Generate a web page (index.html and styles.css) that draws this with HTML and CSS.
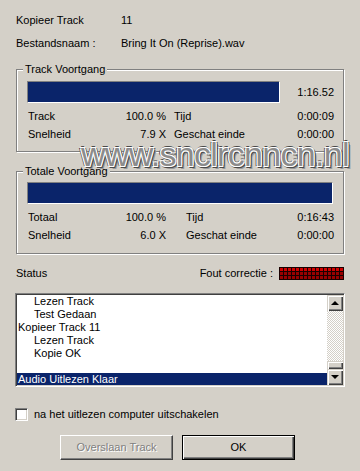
FILE: index.html
```html
<!DOCTYPE html>
<html>
<head>
<meta charset="utf-8">
<link rel="stylesheet" href="styles.css">
</head>
<body>
<div class="dialog">
  <div class="info">
    <div class="info-row"><span class="info-label">Kopieer Track</span><span>11</span></div>
    <div class="info-row second"><span class="info-label">Bestandsnaam :</span><span>Bring It On (Reprise).wav</span></div>
  </div>

  <div class="group group-track">
    <span class="legend">Track Voortgang</span>
    <div class="bar-row bar-row-track">
      <div class="bar bar-short"></div>
      <span class="time">1:16.52</span>
    </div>
    <div class="stats">
      <span>Track</span><span class="num">100.0 %</span><span class="lbl2">Tijd</span><span class="val">0:00:09</span>
      <span>Snelheid</span><span class="num">7.9 X</span><span class="lbl2">Geschat einde</span><span class="val">0:00:00</span>
    </div>
  </div>

  <div class="group group-total">
    <span class="legend">Totale Voortgang</span>
    <div class="bar-row bar-row-total">
      <div class="bar bar-long"></div>
    </div>
    <div class="stats stats-total">
      <span>Totaal</span><span class="num">100.0 %</span><span class="lbl2">Tijd</span><span class="val">0:16:43</span>
      <span>Snelheid</span><span class="num">6.0 X</span><span class="lbl2">Geschat einde</span><span class="val">0:00:00</span>
    </div>
  </div>

  <div class="status-row">
    <span>Status</span>
    <span class="fout">Fout correctie :</span>
    <svg class="led" width="65" height="13" viewBox="0 0 65 13">
      <defs>
        <pattern id="ledTop" width="4" height="4" patternUnits="userSpaceOnUse"><rect x="1" y="1" width="3" height="3" fill="#d00000"/></pattern>
        <pattern id="ledLow" width="4" height="4" patternUnits="userSpaceOnUse"><rect x="1" y="1" width="3" height="3" fill="#980000"/></pattern>
      </defs>
      <rect width="65" height="13" fill="#1a0000"/>
      <rect width="65" height="5" fill="url(#ledTop)"/>
      <rect y="5" width="65" height="8" fill="url(#ledLow)"/>
    </svg>
  </div>

  <div class="listbox">
    <div class="items">
      <div class="item sub">Lezen Track</div>
      <div class="item sub">Test Gedaan</div>
      <div class="item">Kopieer Track 11</div>
      <div class="item sub">Lezen Track</div>
      <div class="item sub">Kopie OK</div>
      <div class="item"></div>
      <div class="item selected">Audio Uitlezen Klaar</div>
    </div>
    <div class="scrollbar">
      <div class="sb-btn"><span class="arrow-up"></span></div>
      <div class="sb-track"></div>
      <div class="sb-thumb"></div>
      <div class="sb-btn"><span class="arrow-down"></span></div>
    </div>
  </div>

  <div class="check-row">
    <span class="checkbox"></span>
    <span>na het uitlezen computer uitschakelen</span>
  </div>

  <div class="buttons">
    <div class="btn disabled">Overslaan Track</div>
    <div class="btn default">OK</div>
  </div>

  <div class="watermark">www.snclrcnncn.nl</div>
</div>
</body>
</html>
```
FILE: styles.css
```css
* { box-sizing: border-box; }
html, body { margin: 0; padding: 0; }
body { background: #d4d0c8; }

.dialog {
  position: relative;
  width: 360px;
  height: 471px;
  overflow: hidden;
  background: #d4d0c8;
  font-family: "Liberation Sans", Arial, sans-serif;
  font-size: 11px;
  color: #000;
  display: flex;
  flex-direction: column;
}

.info { padding: 14px 0 0 16px; }
.info-row { display: flex; height: 13px; line-height: 13px; }
.info-row.second { margin-top: 10px; }
.info-label { width: 105px; }

.group {
  margin-left: 16px;
  width: 328px;
  height: 83px;
  border: 1px solid #808080;
  box-shadow: inset 1px 1px 0 #fff, 1px 1px 0 #fff;
  display: flex;
  flex-direction: column;
}
.group-track { margin-top: 19px; }
.group-total { margin-top: 19px; }

.legend {
  align-self: flex-start;
  height: 13px;
  line-height: 13px;
  margin: -7px 0 0 6px;
  padding: 0 2px;
  background: #d4d0c8;
  position: relative;
}

.bar-row {
  display: flex;
  align-items: center;
  padding-left: 10px;
  height: 22px;
}
.bar-row-track { margin-top: 5px; }
.bar-row-total { margin-top: 4px; }

.bar {
  height: 22px;
  background: #0a246a;
  border: 1px solid;
  border-color: #808080 #fff #fff #808080;
}
.bar-short { width: 253px; }
.bar-long { width: 306px; }

.time { margin-left: auto; padding-right: 9px; }

.stats {
  margin-top: 4px;
  padding: 0 9px 0 11px;
  display: grid;
  grid-template-columns: 72px 66px 1fr auto;
  grid-auto-rows: 18px;
  align-items: center;
  line-height: 13px;
}
.num { text-align: right; }
.lbl2 { padding-left: 8px; }
.stats-total .lbl2 { padding-left: 20px; }
.val { text-align: right; }

.status-row {
  margin-top: 13px;
  height: 13px;
  line-height: 13px;
  padding: 0 16px;
  display: flex;
  align-items: center;
}
.fout { margin-left: auto; margin-right: 6px; }
.led { display: block; }

.listbox {
  margin: 13px 0 0 15px;
  width: 330px;
  height: 94px;
  background: #fff;
  border: 1px solid;
  border-color: #808080 #fff #fff #808080;
  box-shadow: inset 1px 1px 0 #404040, inset -1px -1px 0 #d4d0c8;
  padding: 1px;
  display: flex;
}
.items { flex: 1; overflow: hidden; }
.item { height: 13px; line-height: 13px; padding-left: 1px; white-space: nowrap; }
.item.sub { padding-left: 17px; }
.item.selected { background: #0a246a; color: #fff; }

.scrollbar { width: 16px; display: flex; flex-direction: column; }
.sb-btn, .sb-thumb {
  background: #d4d0c8;
  box-shadow: inset 1px 1px 0 #d4d0c8, inset 2px 2px 0 #fff, inset -1px -1px 0 #404040, inset -2px -2px 0 #808080;
}
.sb-btn { height: 16px; display: flex; align-items: center; justify-content: center; }
.sb-track {
  flex: 1;
  background: repeating-conic-gradient(#fff 0 25%, #d4d0c8 0 50%) 0 0 / 2px 2px;
}
.sb-thumb { height: 8px; }
.arrow-up, .arrow-down { width: 0; height: 0; border-left: 4px solid transparent; border-right: 4px solid transparent; }
.arrow-up { border-bottom: 4px solid #000; margin-top: -1px; }
.arrow-down { border-top: 4px solid #000; }

.check-row {
  margin: 21px 0 0 15px;
  display: flex;
  align-items: center;
  height: 13px;
  line-height: 13px;
}
.checkbox {
  width: 13px;
  height: 13px;
  background: #fff;
  border: 1px solid;
  border-color: #808080 #fff #fff #808080;
  box-shadow: inset 1px 1px 0 #404040, inset -1px -1px 0 #d4d0c8;
  margin-right: 6px;
}

.buttons {
  margin: 14px 0 0 60px;
  display: flex;
  gap: 9px;
}
.btn {
  width: 113px;
  height: 25px;
  line-height: 23px;
  text-align: center;
  background: #d4d0c8;
  border: 1px solid;
  border-color: #fff #404040 #404040 #fff;
  box-shadow: inset -1px -1px 0 #808080;
}
.btn.disabled { color: #808080; text-shadow: 1px 1px 0 #fff; }
.btn.default {
  border: 1px solid #000;
  box-shadow: inset 1px 1px 0 #fff, inset -1px -1px 0 #404040, inset -2px -2px 0 #808080;
}

.watermark {
  position: absolute;
  left: 81px;
  top: 142px;
  font-family: "Liberation Sans", Arial, sans-serif;
  font-size: 34px;
  line-height: 24px;
  letter-spacing: -0.7px;
  color: #8c8c8c;
  white-space: nowrap;
  text-shadow:
    -1px -1px 0 #fff, 1px -1px 0 #fff, -1px 1px 0 #fff, 1px 1px 0 #fff,
    -2px 0 0 #4a4a4a, 2px 0 0 #4a4a4a, 0 -2px 0 #4a4a4a, 0 2px 0 #4a4a4a,
    2px 2px 0 #4a4a4a, 3px 3px 0 #9a9a9a;
}
```
